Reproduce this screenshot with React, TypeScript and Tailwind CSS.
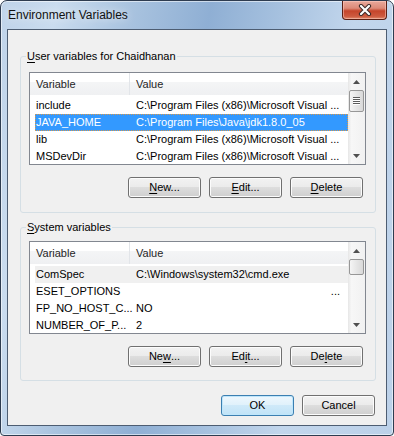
import React from "react";

type Row = {
  name: string;
  value: string;
  selected?: boolean;
  inactive?: boolean;
  right?: boolean;
};

const userRows: Row[] = [
  { name: "include", value: "C:\\Program Files (x86)\\Microsoft Visual ..." },
  { name: "JAVA_HOME", value: "C:\\Program Files\\Java\\jdk1.8.0_05", selected: true },
  { name: "lib", value: "C:\\Program Files (x86)\\Microsoft Visual ..." },
  { name: "MSDevDir", value: "C:\\Program Files (x86)\\Microsoft Visual ..." },
];

const systemRows: Row[] = [
  { name: "ComSpec", value: "C:\\Windows\\system32\\cmd.exe", inactive: true },
  { name: "ESET_OPTIONS", value: "...", right: true },
  { name: "FP_NO_HOST_C...", value: "NO" },
  { name: "NUMBER_OF_P...", value: "2" },
];

const Arrow = ({ up }: { up?: boolean }) => (
  <svg width="7" height="4" viewBox="0 0 7 4">
    <path d={up ? "M0 4 L3.5 0 L7 4 Z" : "M0 0 L3.5 4 L7 0 Z"} fill="#505050" />
  </svg>
);

const ScrollBar = ({ thumb, grip }: { thumb: number; grip?: boolean }) => (
  <div className="w-[17px] shrink-0 flex flex-col bg-[linear-gradient(to_right,#e6e6e6,#f7f7f7_20%,#f1f1f1)]">
    <div className="h-[17px] flex items-center justify-center">
      <Arrow up />
    </div>
    <div className="flex-1">
      <div
        className="mx-[1px] rounded-[2px] border border-[#979797] bg-[linear-gradient(to_right,#f5f5f5,#e6e6e6_50%,#d9d9d9)] flex flex-col items-center justify-center"
        style={{ height: thumb }}
      >
        {grip &&
          [0, 1, 2, 3].map((i) => (
            <div key={i} className="w-[7px] h-[2px] border-t border-[#5c5c5c] border-b border-b-white" />
          ))}
      </div>
    </div>
    <div className="h-[17px] flex items-center justify-center">
      <Arrow />
    </div>
  </div>
);

const ListView = ({ rows, thumb, grip }: { rows: Row[]; thumb: number; grip?: boolean }) => (
  <div className="ml-[8px] w-[337px] h-[93px] border border-[#828790] bg-white flex overflow-hidden">
    <div className="flex-1 min-w-0 flex flex-col">
      <div className="h-[22px] shrink-0 flex bg-[linear-gradient(to_bottom,#ffffff_0%,#ffffff_42%,#f4f5f6_43%,#eff0f2_100%)] text-[#262626]">
        <div className="w-[100px] pl-[6px] border-r border-[#e2e5e9] leading-[22px]">Variable</div>
        <div className="pl-[6px] leading-[22px]">Value</div>
      </div>
      <div className="pl-[5px] pt-[2px]">
        {rows.map((r) => (
          <div
            key={r.name}
            className={`h-[17px] flex leading-[17px] whitespace-nowrap ${
              r.selected
                ? "bg-[#3399ff] text-white outline-1 outline-dotted outline-[#d9984a] -outline-offset-1"
                : r.inactive
                ? "bg-[#f0f0f0]"
                : ""
            }`}
          >
            <div className="w-[101px] pl-[1px] overflow-hidden">{r.name}</div>
            <div className={`flex-1 overflow-hidden ${r.right ? "text-right pr-[8px]" : ""}`}>{r.value}</div>
          </div>
        ))}
      </div>
    </div>
    <ScrollBar thumb={thumb} grip={grip} />
  </div>
);

const Button = ({
  children,
  primary,
}: {
  children: React.ReactNode;
  primary?: boolean;
}) => (
  <div
    className={`w-[73px] h-[21px] rounded-[3px] border flex items-center justify-center leading-none ${
      primary
        ? "border-[#3c7fb1] bg-[linear-gradient(to_bottom,#eef7fd_0%,#e0f1fb_48%,#cfe9f9_50%,#c0e3f7_100%)] shadow-[inset_0_0_0_1px_#bfe6fb]"
        : "border-[#707070] bg-[linear-gradient(to_bottom,#f2f2f2_0%,#ebebeb_48%,#dddddd_50%,#cfcfcf_100%)] shadow-[inset_0_0_0_1px_#fcfcfc]"
    }`}
  >
    {children}
  </div>
);

const U = ({ children }: { children: React.ReactNode }) => (
  <span className="underline underline-offset-[2px]">{children}</span>
);

export default function App() {
  return (
    <div className="w-[394px] h-[436px] flex flex-col rounded-t-[7px] rounded-b-[4px] border border-[#2e3c50] bg-[linear-gradient(100deg,#bfd3e9_0%,#cadcef_12%,#a9c3df_28%,#8fafd4_45%,#a6c1df_60%,#c2d6ec_76%,#bcd1e9_100%)] pb-[9px] text-black font-['Liberation_Sans',Arial,sans-serif] shadow-[inset_0_0_0_1px_rgba(255,255,255,0.55)]">
      <div className="h-[28px] shrink-0 flex items-start justify-between">
        <div className="pl-[7px] leading-[28px] text-[12px] text-[#111] [text-shadow:0_0_8px_rgba(255,255,255,0.9)]">
          Environment Variables
        </div>
        <div className="mr-[6px] w-[45px] h-[19px] rounded-b-[4px] border border-t-0 border-[#5a1f14] bg-[linear-gradient(to_bottom,#e9a99b_0%,#dd8a78_40%,#c5452b_55%,#cd5a3f_85%,#e08c6d_100%)] shadow-[inset_0_0_0_1px_rgba(255,210,200,0.5)] flex items-center justify-center">
          <svg width="14" height="12" viewBox="0 0 14 12">
            <path d="M3 2 L11 10 M11 2 L3 10" stroke="#3d2a28" strokeWidth="4.2" strokeLinecap="round" />
            <path d="M3 2 L11 10 M11 2 L3 10" stroke="#ffffff" strokeWidth="2.2" strokeLinecap="round" />
          </svg>
        </div>
      </div>

      <div className="mx-[6px] flex-1 border border-[#4d5d72] bg-[#f0f0f0] flex flex-col pt-[19px] text-[11px]">
        <fieldset className="ml-[12px] w-[356px] border border-[#d5dfe5] rounded-[3px] pb-[14px]">
          <legend className="ml-[5px] px-[1px] leading-[15px]">
            <U>U</U>ser variables for Chaidhanan
          </legend>
          <div className="mt-[8px]">
            <ListView rows={userRows} thumb={22} grip />
          </div>
          <div className="mt-[12px] pr-[12px] flex justify-end gap-[8px]">
            <Button>
              <U>N</U>ew...
            </Button>
            <Button>
              <U>E</U>dit...
            </Button>
            <Button>
              <U>D</U>elete
            </Button>
          </div>
        </fieldset>

        <fieldset className="mt-[7px] ml-[12px] w-[356px] border border-[#d5dfe5] rounded-[3px] pb-[13px]">
          <legend className="ml-[5px] px-[1px] leading-[15px]">
            <U>S</U>ystem variables
          </legend>
          <div className="mt-[6px]">
            <ListView rows={systemRows} thumb={16} />
          </div>
          <div className="mt-[12px] pr-[12px] flex justify-end gap-[8px]">
            <Button>
              Ne<U>w</U>...
            </Button>
            <Button>
              Ed<U>i</U>t...
            </Button>
            <Button>
              De<U>l</U>ete
            </Button>
          </div>
        </fieldset>

        <div className="mt-[14px] pr-[11px] flex justify-end gap-[8px]">
          <Button primary>OK</Button>
          <Button>Cancel</Button>
        </div>
      </div>
    </div>
  );
}
